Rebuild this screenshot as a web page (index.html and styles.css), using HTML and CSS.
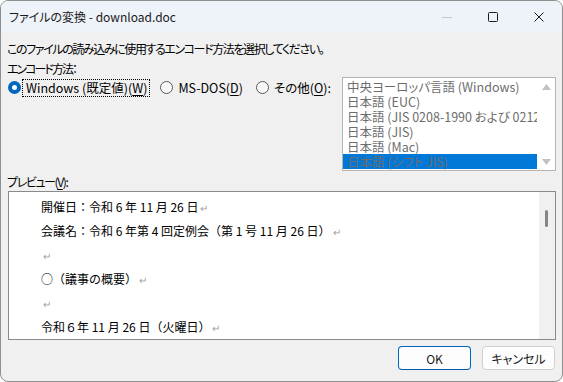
FILE: index.html
```html
<!DOCTYPE html>
<html lang="ja">
<head>
  <meta charset="UTF-8">
  <title>ファイルの変換</title>
  <link rel="stylesheet" href="styles.css">
</head>
<body>
  <div class="window">
    <!-- タイトルバー -->
    <div class="titlebar">
      <span class="title">ファイルの変換 - download.doc</span>
      <div class="controls">
        <span class="ctl ctl-min"><svg width="10" height="10" viewBox="0 0 10 10"><path d="M0 5.5h10" stroke="#c4c6ca" stroke-width="1"/></svg></span>
        <span class="ctl"><svg width="10" height="10" viewBox="0 0 10 10"><rect x="0.5" y="0.5" width="9" height="9" rx="1" fill="none" stroke="#1a1a1a" stroke-width="1"/></svg></span>
        <span class="ctl"><svg width="10" height="10" viewBox="0 0 10 10"><path d="M0.5 0.5l9 9M9.5 0.5l-9 9" stroke="#1a1a1a" stroke-width="1"/></svg></span>
      </div>
    </div>

    <div class="content">
      <p class="msg">このファイルの読み込みに使用するエンコード方法を選択してください。</p>
      <p class="msg enc-label">エンコード方法：</p>

      <div class="enc-row">
        <div class="radios">
          <label class="radio">
            <span class="dot checked"></span>
            <span class="cap focus">Windows (既定値)(<u>W</u>)</span>
          </label>
          <label class="radio">
            <span class="dot"></span>
            <span class="cap">MS-DOS(<u>D</u>)</span>
          </label>
          <label class="radio">
            <span class="dot"></span>
            <span class="cap">その他(<u>O</u>):</span>
          </label>
        </div>

        <div class="listbox">
          <ul class="items">
            <li>中央ヨーロッパ言語 (Windows)</li>
            <li>日本語 (EUC)</li>
            <li>日本語 (JIS 0208-1990 および 0212-1990)</li>
            <li>日本語 (JIS)</li>
            <li>日本語 (Mac)</li>
            <li class="selected">日本語 (シフト JIS)</li>
          </ul>
          <div class="vscroll">
            <svg width="9" height="6" viewBox="0 0 9 6"><path d="M0 6L4.5 0L9 6z" fill="#c2c2c2"/></svg>
            <svg width="9" height="6" viewBox="0 0 9 6"><path d="M0 0L4.5 6L9 0z" fill="#c2c2c2"/></svg>
          </div>
        </div>
      </div>

      <p class="msg preview-label">プレビュー(<u>V</u>):</p>

      <div class="preview">
        <div class="doc">
          <div class="line">開催日：令和 6 年 11 月 26 日<span class="ret">↵</span></div>
          <div class="line">会議名：令和 6 年第 4 回定例会（第 1 号 11 月 26 日）<span class="ret">↵</span></div>
          <div class="line"><span class="ret">↵</span></div>
          <div class="line">○（議事の概要）<span class="ret">↵</span></div>
          <div class="line"><span class="ret">↵</span></div>
          <div class="line">令和６年 11 月 26 日（火曜日）<span class="ret">↵</span></div>
        </div>
        <div class="pscroll"><span class="thumb"></span></div>
      </div>

      <div class="buttons">
        <button class="btn btn-default">OK</button>
        <button class="btn">キャンセル</button>
      </div>
    </div>
  </div>
</body>
</html>
```

FILE: styles.css
```css
body {
  margin: 0;
  background-color: #ffffff;
  font-family: "Noto Sans CJK JP", "Noto Sans", sans-serif;
  font-size: 12px;
  color: #000;
}
.window {
  width: 563px;
  height: 382px;
  box-sizing: border-box;
  border: 1px solid #8f8f8f;
  border-radius: 8px;
  overflow: hidden;
  background-color: #f0f0f0;
}
.titlebar {
  height: 31px;
  display: flex;
  align-items: center;
  background-color: #eef2f9;
  padding-left: 8px;
}
.title {
  font-feature-settings: "palt";
  color: #1a1a1a;
  margin-top: -1px;
}
.controls {
  margin-left: auto;
  display: flex;
  height: 100%;
}
.ctl {
  width: 46px;
  display: flex;
  align-items: center;
  justify-content: center;
}
.content {
  padding: 0 6px 0 6px;
  font-feature-settings: "palt";
}
.msg {
  margin: 0;
  line-height: 15px;
  height: 15px;
  letter-spacing: -1.4px;
  white-space: nowrap;
}
.msg:first-child {
  margin-top: 9px;
  margin-bottom: 5px;
}
.enc-label {
  letter-spacing: -2px;
}
u {
  text-decoration-thickness: 1px;
  text-underline-offset: 2px;
}
/* エンコード方法 */
.enc-row {
  display: flex;
  align-items: flex-start;
  margin-top: 1px;
}
.radios {
  display: flex;
  gap: 9px;
  margin-top: 1px;
  flex-shrink: 0;
}
.radio {
  display: flex;
  align-items: center;
  gap: 1px;
  height: 19px;
  white-space: nowrap;
}
.dot {
  width: 13px;
  height: 13px;
  flex-shrink: 0;
  box-sizing: border-box;
  border: 1px solid #5c5c5c;
  border-radius: 50%;
  background-color: #f7f7f7;
  margin-left: 1px;
}
.dot.checked {
  border: 4px solid #0067c0;
  background-color: #fff;
}
.cap {
  font-size: 12.5px;
  border: 1px solid transparent;
  padding: 0 2px 0 3px;
  line-height: 16px;
}
.cap.focus {
  border: 1px dotted #000;
}
.listbox {
  margin-left: auto;
  width: 214px;
  height: 94px;
  flex-shrink: 0;
  box-sizing: border-box;
  border: 1px solid #b4b4b4;
  background-color: #fff;
  display: flex;
}
.items {
  list-style: none;
  margin: 0;
  padding: 1px 0 0 0;
  flex: 1;
  min-width: 0;
  overflow: hidden;
  color: #6d6d6d;
  font-size: 12.5px;
}
.items li {
  height: 15px;
  line-height: 15px;
  padding-left: 4px;
  white-space: nowrap;
}
.items li.selected {
  background-color: #0078d7;
}
.vscroll {
  width: 18px;
  flex-shrink: 0;
  display: flex;
  flex-direction: column;
  justify-content: space-between;
  align-items: center;
  padding: 6px 0 5px 0;
}
/* プレビュー */
.preview-label {
  margin-top: 3px;
  margin-bottom: 2px;
}
.preview {
  margin-left: 1px;
  height: 149px;
  box-sizing: border-box;
  border: 1px solid #8a8a8a;
  display: flex;
  background-color: #f0f0f0;
}
.doc {
  flex: 1;
  background-color: #fff;
  padding: 3px 0 0 32px;
  font-feature-settings: normal;
  overflow: hidden;
}
.line {
  height: 24px;
  line-height: 24px;
  white-space: nowrap;
}
.ret {
  color: #9e9e9e;
  font-size: 10px;
  margin-left: 2px;
}
.pscroll {
  width: 16px;
  position: relative;
}
.thumb {
  position: absolute;
  left: 6px;
  top: 18px;
  width: 3px;
  height: 17px;
  border-radius: 2px;
  background-color: #858585;
}
/* ボタン */
.buttons {
  display: flex;
  justify-content: flex-end;
  gap: 11px;
  margin-top: 6px;
  padding-right: 1px;
}
.btn {
  width: 73px;
  height: 24px;
  box-sizing: border-box;
  font-family: inherit;
  font-size: 12px;
  font-feature-settings: "palt";
  background-color: #fdfdfd;
  border: 1px solid #d0d0d0;
  border-radius: 4px;
  color: #1a1a1a;
  padding: 0;
}
.btn-default {
  border: 1px solid #0067c0;
  border-bottom-color: #005aa8;
}
```
